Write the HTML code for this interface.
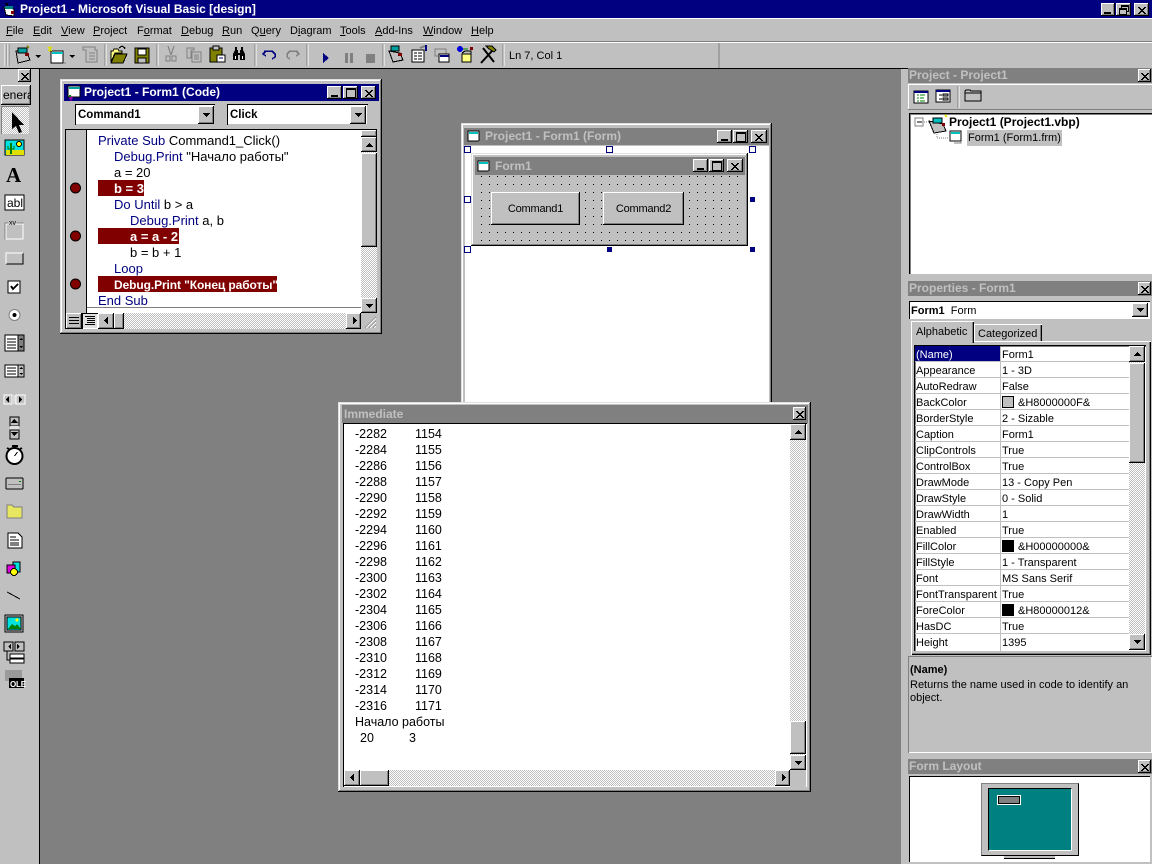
<!DOCTYPE html>
<html><head><meta charset="utf-8"><title>Project1 - Microsoft Visual Basic [design]</title>
<style>
html,body{margin:0;padding:0;background:#808080}
#r{position:relative;width:1152px;height:864px;overflow:hidden;background:#808080;font:12px "Liberation Sans","Noto Sans CJK SC",sans-serif;color:#000}
#r div,#r i,#r span.t,#r span.tt{position:absolute;display:block;box-sizing:border-box}
.t{white-space:pre;line-height:16px;font-style:normal}
.bd{font-weight:bold}
.s{background:#c0c0c0}
.w{background:#fff}
.b{background:#c0c0c0;box-shadow:inset -1px -1px #000,inset 1px 1px #fff,inset -2px -2px #808080}
.win{background:#c0c0c0;box-shadow:inset -1px -1px #000,inset 1px 1px #dfdfdf,inset -2px -2px #808080,inset 2px 2px #fff}
.tb{background:#808080}
.tt{font-weight:bold;font-size:12px;color:#c0c0c0;white-space:pre;line-height:16px}
.nv{background:#000080}
.dz{background:conic-gradient(#fff 25%,#c0c0c0 0 50%,#fff 0 75%,#c0c0c0 0) 0 0/2px 2px}
.b svg{position:absolute;left:50%;top:50%;width:16px;height:16px;margin:-8px 0 0 -8px}
svg{shape-rendering:crispEdges;overflow:visible}
.kw{color:#000080}
u{text-decoration:underline}
.m .t{font-size:11px}
.c .t{font-size:13px}
.i .t{font-size:12.5px}
</style></head><body><div id="r">
<svg width="0" height="0" style="position:absolute"><defs>
<symbol id="cl" overflow="visible"><path d="M-4-3h2v1h1v1h2v-1h1v-1h2v1h-1v1h-1v1h-1v1h1v1h1v1h1v1h-2v-1h-1v-1h-2v1h-1v1h-2v-1h1v-1h1v-1h1v-1h-1v-1h-1v-1h-1z"/></symbol>
<symbol id="mn" overflow="visible"><rect x="-4" y="2" width="7" height="2"/></symbol>
<symbol id="mx" overflow="visible"><path d="M-5-5h10v10h-10zM-4-3v7h8v-7z" fill-rule="evenodd"/></symbol>
<symbol id="rs" overflow="visible"><path d="M-3-5h8v7h-2v3h-8v-7h2zM-2-3v1h5v3h1v-4zM-4 0v4h6v-4z" fill-rule="evenodd"/></symbol>
<symbol id="up" overflow="visible"><path d="M0-2h1v1h1v1h1v1h1v1h-7v-1h1v-1h1v-1h1z"/></symbol>
<symbol id="dn" overflow="visible"><path d="M-3-2h7v1h-1v1h-1v1h-1v1h-1v-1h-1v-1h-1v-1h-1z"/></symbol>
<symbol id="lf" overflow="visible"><path d="M1-4h1v7h-1v-1h-1v-1h-1v-1h-1v-1h1v-1h1v-1h1z"/></symbol>
<symbol id="rt" overflow="visible"><path d="M-1-4h1v1h1v1h1v1h1v1h-1v1h-1v1h-1v1h-1z"/></symbol>
<symbol id="fi" overflow="visible"><rect x="0" y="0" width="11" height="10" fill="#fff" stroke="#000"/><rect x="1" y="1" width="9" height="2" fill="#00c0c0"/><path d="M11 10v2h-7" stroke="#808080" fill="none"/></symbol>
</defs></svg>

<!-- main frame -->
<div class="nv" style="left:0;top:0;width:1152px;height:18px"></div>
<div class="s" style="left:0;top:18px;width:1152px;height:51px;border-top:1px solid #fff"></div>
<div style="left:0;top:41px;width:1152px;height:1px;background:#808080"></div>
<div style="left:0;top:42px;width:1152px;height:1px;background:#fff"></div>
<div style="left:0;top:68px;width:1152px;height:1px;background:#000"></div>
<span class="t bd" style="left:20px;top:1px;color:#fff;font-size:12px">Project1 - Microsoft Visual Basic [design]</span>
<svg style="position:absolute;left:2px;top:2px" width="16" height="16"><path d="M2 5l10 2v7l-8-1z" fill="#fff" stroke="#000"/><rect x="3" y="4" width="8" height="3" fill="#008080"/><rect x="9" y="9" width="3" height="3" fill="#800000"/><path d="M3 1l3 3M6 1l-2 2" stroke="#000"/></svg>
<i class="b" style="left:1101px;top:3px;width:14px;height:13px"><svg viewBox="-8 -8 16 16"><use href="#mn"/></svg></i>
<i class="b" style="left:1116px;top:3px;width:15px;height:13px"><svg viewBox="-8 -8 16 16"><use href="#rs"/></svg></i>
<i class="b" style="left:1134px;top:3px;width:15px;height:13px"><svg viewBox="-8 -8 16 16"><use href="#cl"/></svg></i>

<!-- menu -->
<div class="m" style="left:0;top:0">
<span class="t" style="left:6px;top:23px"><u>F</u>ile</span>
<span class="t" style="left:33px;top:23px"><u>E</u>dit</span>
<span class="t" style="left:61px;top:23px"><u>V</u>iew</span>
<span class="t" style="left:93px;top:23px"><u>P</u>roject</span>
<span class="t" style="left:137px;top:23px">F<u>o</u>rmat</span>
<span class="t" style="left:181px;top:23px"><u>D</u>ebug</span>
<span class="t" style="left:222px;top:23px"><u>R</u>un</span>
<span class="t" style="left:251px;top:23px">Q<u>u</u>ery</span>
<span class="t" style="left:290px;top:23px">D<u>i</u>agram</span>
<span class="t" style="left:340px;top:23px"><u>T</u>ools</span>
<span class="t" style="left:375px;top:23px"><u>A</u>dd-Ins</span>
<span class="t" style="left:423px;top:23px"><u>W</u>indow</span>
<span class="t" style="left:471px;top:23px"><u>H</u>elp</span>
<span class="t" style="left:509px;top:48px">Ln 7, Col 1</span>
</div>

<!-- toolbar -->
<svg style="position:absolute;left:0;top:42px" width="730" height="27">
<g fill="none">
<path d="M5 2v22M8 2v22" stroke="#fff" stroke-width="1"/><path d="M6 2v22M9 2v22" stroke="#808080"/>
<path d="M105 2v22M157 2v22M255 2v22M307 2v22M383 2v22M503 2v22" stroke="#808080"/><path d="M106 2v22M158 2v22M256 2v22M308 2v22M384 2v22M504 2v22" stroke="#fff"/>
<path d="M719 1v25" stroke="#808080"/>
</g>
<!-- add project -->
<path d="M16 9l11 2 3 7-12 3z" fill="#c0c0c0" stroke="#000"/><rect x="18" y="6" width="9" height="5" fill="#00a0a0" stroke="#000"/><rect x="25" y="11" width="4" height="3" fill="#800000"/><path d="M27 4l2 2" stroke="#808000" stroke-width="2"/>
<path d="M35 13h6l-3 3z" fill="#000"/>
<!-- add form -->
<rect x="51" y="9" width="12" height="12" fill="#fff" stroke="#000"/><rect x="52" y="10" width="11" height="2" fill="#00c0c0"/><path d="M48 5l4 4M52 5l-4 4M50 4v6" stroke="#e0e000"/><path d="M64 21h2" stroke="#808080"/>
<path d="M69 13h6l-3 3z" fill="#000"/>
<!-- menu editor -->
<path d="M83 5h12v3h2v12h-11v-12h-3z" fill="#c0c0c0" stroke="#808080"/><path d="M89 11h6M89 14h6M89 17h6" stroke="#808080"/>
<!-- open -->
<path d="M111 20v-11h2l1-2h4l1 2h3v2l-7 0-4 9z" fill="#ffff80" stroke="#000"/><path d="M115 12h12l-4 9h-12z" fill="#808000" stroke="#000"/><path d="M119 6l3-2 3 2-1 1" stroke="#000" fill="none"/>
<!-- save -->
<rect x="135" y="6" width="14" height="15" fill="#808000" stroke="#000"/><rect x="138" y="7" width="8" height="6" fill="#fff" stroke="#000"/><rect x="138" y="16" width="8" height="5" fill="#c0c0c0" stroke="#000"/>
<!-- cut -->
<path d="M168 4l3 9M174 4l-3 9" stroke="#808080" fill="none"/><rect x="166" y="14" width="4" height="5" fill="none" stroke="#808080"/><rect x="172" y="14" width="4" height="5" fill="none" stroke="#808080"/>
<!-- copy -->
<path d="M187 6h7v2h-3v8h-4z" fill="#c0c0c0" stroke="#808080"/><rect x="192" y="10" width="9" height="10" fill="#c0c0c0" stroke="#808080"/><path d="M194 13h5M194 15h5M194 17h5" stroke="#808080"/>
<!-- paste -->
<rect x="210" y="6" width="12" height="14" fill="#808000" stroke="#000"/><rect x="213" y="4" width="6" height="4" fill="#c0c0c0" stroke="#000"/><rect x="217" y="13" width="8" height="7" fill="#fff" stroke="#000"/><path d="M219 16h4" stroke="#000080"/>
<!-- find -->
<path d="M233 18v-6l2-4h3v3h2v-3h3l2 4v6h-5v-5h-2v5z" fill="#000"/><path d="M235 5h2v3h-2zM241 5h2v3h-2z" fill="#000"/><rect x="235" y="14" width="1" height="3" fill="#fff"/><rect x="242" y="14" width="1" height="3" fill="#fff"/>
<!-- undo redo -->
<path d="M266 9l-3 3 3 2M263 12h1M264 9h8l3 3v3l-3 2" stroke="#000080" stroke-width="1.5" fill="none"/>
<path d="M296 9l3 3-3 2M299 12h-1M298 9h-8l-3 3v3l3 2" stroke="#808080" stroke-width="1.5" fill="none"/>
<!-- run pause stop -->
<path d="M323 11l6 5-6 5z" fill="#000080"/>
<rect x="345" y="11" width="3" height="10" fill="#808080"/><rect x="350" y="11" width="3" height="10" fill="#808080"/>
<rect x="366" y="12" width="9" height="9" fill="#808080"/>
<!-- project explorer etc -->
<path d="M389 9l11 2 3 7-10 2z" fill="#c0c0c0" stroke="#000"/><rect x="391" y="4" width="8" height="5" fill="#00a0a0" stroke="#000"/><rect x="398" y="11" width="4" height="3" fill="#800000"/>
<rect x="412" y="8" width="12" height="12" fill="#fff" stroke="#000"/><path d="M414 11h3M414 14h3M414 17h3M418 11h4M418 14h4M418 17h4" stroke="#000"/><path d="M420 6l5-2" stroke="#808080" stroke-width="2"/><rect x="425" y="3" width="2" height="6" fill="#000080"/>
<rect x="435" y="7" width="11" height="7" fill="#c0c0c0" stroke="#808080"/><rect x="439" y="12" width="10" height="8" fill="#fff" stroke="#000"/><rect x="440" y="13" width="9" height="2" fill="#000080"/>
<circle cx="460" cy="7" r="3" fill="#0000e0"/><rect x="470" y="5" width="3" height="3" fill="#800000"/><path d="M463 7h5" stroke="#008000"/><rect x="462" y="12" width="9" height="8" fill="#ffff80" stroke="#000"/><path d="M462 11l3-2h6v3" fill="none" stroke="#000"/>
<path d="M481 21l11-12M483 6l11 14" stroke="#000" stroke-width="2" fill="none" shape-rendering="auto"/><path d="M486 4h6l4 4-2 2-5-3z" fill="#808000" stroke="#000"/>
</svg>

<!-- toolbox -->
<div class="s" style="left:0;top:69px;width:39px;height:795px"></div>
<div style="left:39px;top:69px;width:1px;height:795px;background:#000"></div>
<i class="b" style="left:18px;top:69px;width:13px;height:13px"><svg viewBox="-8 -8 16 16"><use href="#cl"/></svg></i>
<div class="b" style="left:1px;top:85px;width:30px;height:20px;overflow:hidden"><span class="t" style="left:2px;top:2px;position:absolute">enera</span></div>
<div class="dz" style="left:1px;top:106px;width:28px;height:28px;box-shadow:inset 1px 1px #808080"></div>
<svg style="position:absolute;left:0;top:69px" width="39" height="640">
<path d="M12 43v17l4-3 3 7 3-1-3-7h5z" fill="#000"/>
<!-- picture -->
<rect x="5" y="71" width="19" height="15" fill="#00e0e0" stroke="#000"/><rect x="6" y="81" width="18" height="5" fill="#e0e000"/><circle cx="19" cy="75" r="2.5" fill="#ffff00" stroke="#000"/><rect x="10" y="74" width="2" height="11" fill="#008000"/><path d="M8 77v3h6v-3" fill="none" stroke="#008000"/>
<text x="6" y="113" font-family="Liberation Serif" font-weight="bold" style="font-size:21px">A</text>
<rect x="5" y="126" width="19" height="15" fill="#fff" stroke="#000"/><text x="7" y="138" style="font-size:12px">abl</text>
<rect x="5" y="154" width="18" height="16" fill="#c0c0c0" stroke="#808080"/><rect x="6" y="155" width="17" height="15" fill="none" stroke="#fff"/><rect x="8" y="151" width="9" height="4" fill="#c0c0c0"/><text x="9" y="156" style="font-size:7px">xv</text>
<rect x="6" y="184" width="17" height="11" fill="#c0c0c0"/><path d="M6 195h17v-11" fill="none" stroke="#000"/><path d="M6 195v-11h17" fill="none" stroke="#fff"/>
<rect x="8" y="212" width="12" height="12" fill="#fff" stroke="#000"/><path d="M11 217l2 3 5-5" stroke="#000" stroke-width="2" fill="none"/>
<circle cx="14.500" cy="246" r="5.500" fill="#fff" stroke="#808080" shape-rendering="auto"/><circle cx="14.500" cy="246" r="2" fill="#000" shape-rendering="auto"/>
<rect x="5" y="266" width="18" height="16" fill="#fff" stroke="#000"/><path d="M7 270h9M7 273h9M7 276h9M7 279h9" stroke="#000"/><rect x="18" y="266" width="6" height="16" fill="#808080" stroke="#000"/><path d="M21 269l-2 2h4zM21 279l-2-2h4z"/>
<rect x="5" y="296" width="18" height="12" fill="#fff" stroke="#000"/><path d="M7 299h9M7 302h9M7 305h9" stroke="#000"/><rect x="18" y="296" width="6" height="12" fill="#c0c0c0" stroke="#000"/><path d="M21 298l-2 2h4zM21 306l-2-2h4z"/>
<!-- hscroll -->
<rect x="4" y="326" width="8" height="9" fill="#c0c0c0" stroke="#fff"/><path d="M9 327v7l-3-3.500z"/><rect x="12" y="326" width="4" height="9" fill="#d8d8d8"/><rect x="16" y="326" width="9" height="9" fill="#c0c0c0" stroke="#fff"/><path d="M19 327v7l3-3.500z"/>
<!-- vscroll -->
<rect x="10" y="348" width="9" height="9" fill="#c0c0c0" stroke="#000"/><path d="M14 350l-3 4h7z"/><rect x="10" y="357" width="9" height="4" fill="#e0e0e0"/><rect x="10" y="361" width="9" height="9" fill="#c0c0c0" stroke="#000"/><path d="M14 367l-3-4h7z"/>
<!-- timer -->
<circle cx="14.500" cy="387" r="8" fill="#fff" stroke="#000" stroke-width="2" shape-rendering="auto"/><rect x="12" y="376" width="6" height="2"/><path d="M14.500 387l3-4" stroke="#000"/><path d="M9 380l-2-1M20 380l2-1" stroke="#000" stroke-width="2"/>
<!-- drive -->
<rect x="6" y="409" width="17" height="11" rx="1" fill="#c0c0c0" stroke="#000"/><rect x="8" y="415" width="13" height="1" fill="#808080"/><rect x="19" y="412" width="2" height="1" fill="#008000"/>
<!-- dir -->
<path d="M7 449v-13h5l2 2h8v11z" fill="#e8e860" stroke="#808080"/>
<!-- file -->
<path d="M8 464h10l4 4v11h-14z" fill="#fff" stroke="#000"/><path d="M10 468h6M10 471h9M10 474h9M10 476h9" stroke="#000"/>
<!-- shape -->
<rect x="13" y="493" width="7" height="10" fill="#00e0e0" stroke="#000"/><rect x="7" y="496" width="8" height="8" fill="#e000e0" stroke="#000"/><circle cx="14" cy="503" r="3.500" fill="#ffff00" stroke="#000"/>
<!-- line -->
<path d="M7 523l13 7" stroke="#000" fill="none"/>
<!-- image -->
<rect x="5" y="546" width="18" height="17" fill="#c0c0c0" stroke="#000"/><rect x="7" y="548" width="14" height="13" fill="#00e0e0" stroke="#000"/><path d="M8 560l4-5 3 2 2-2 4 5z" fill="#008000"/><circle cx="17" cy="551" r="1.500" fill="#ffff00"/>
<!-- data -->
<rect x="4" y="573" width="9" height="9" fill="#c0c0c0" stroke="#000"/><rect x="15" y="573" width="9" height="9" fill="#c0c0c0" stroke="#000"/><path d="M7 575v5M11 575l-3 2.500 3 2.500zM21 575v5M17 575l3 2.500-3 2.500z"/><path d="M7 582v9h3" stroke="#000" fill="none"/><rect x="10" y="585" width="14" height="4" fill="#fff" stroke="#000"/><rect x="10" y="590" width="14" height="4" fill="#fff" stroke="#000"/>
<!-- ole -->
<rect x="5" y="601" width="17" height="11" fill="#808080" opacity=".6"/><rect x="9" y="609" width="15" height="10" fill="#000"/><text x="10" y="618" fill="#fff" style="font-size:8px;font-weight:bold;letter-spacing:-.2px">OLE</text>
</svg>

<!-- right dock -->
<div class="s" style="left:901px;top:69px;width:251px;height:795px"></div>
<div class="tb" style="left:908px;top:68px;width:244px;height:15px"></div>
<span class="tt" style="left:909px;top:67px">Project - Project1</span>
<i class="b" style="left:1138px;top:69px;width:13px;height:13px"><svg viewBox="-8 -8 16 16"><use href="#cl"/></svg></i>
<div style="left:908px;top:84px;width:244px;height:1px;background:#fff"></div>
<div style="left:908px;top:84px;width:1px;height:25px;background:#fff"></div>
<div style="left:908px;top:109px;width:244px;height:1px;background:#808080"></div>
<svg style="position:absolute;left:908px;top:84px" width="90" height="26">
<rect x="6" y="7" width="14" height="12" fill="#fff" stroke="#000"/><rect x="6" y="7" width="14" height="2" fill="#000080"/><path d="M9 11h2M9 14h2M9 17h2M12 11h5M12 14h4M12 17h5" stroke="#008000"/>
<rect x="28" y="6" width="14" height="12" fill="#fff" stroke="#000"/><rect x="28" y="6" width="14" height="2" fill="#000080"/><path d="M31 11h3M31 15h3" stroke="#000"/><rect x="35" y="10" width="5" height="2" fill="#c0c0c0" stroke="#000"/><rect x="35" y="14" width="5" height="2" fill="#c0c0c0" stroke="#000"/>
<path d="M50 2v22" stroke="#808080"/><path d="M51 2v22" stroke="#fff"/>
<path d="M57 17v-10l1-1h4l1 1h10v10z" fill="#c0c0c0" stroke="#000"/><path d="M57 9h16" stroke="#000"/>
</svg>
<div class="w" style="left:909px;top:113px;width:243px;height:161px;box-shadow:inset 1px 1px #000,inset 2px 2px #808080"></div>
<svg style="position:absolute;left:909px;top:113px" width="160" height="40">
<rect x="6" y="5" width="8" height="8" fill="#fff" stroke="#808080"/><path d="M8 9h5" stroke="#000"/>
<path d="M15 9h5M28 17v8h12" stroke="#808080" stroke-dasharray="1 1" fill="none"/>
<path d="M20 8l14 3 3 7-12 2z" fill="#c0c0c0" stroke="#000"/><rect x="24" y="5" width="9" height="5" fill="#00c0c0" stroke="#000"/><rect x="33" y="10" width="3" height="3" fill="#800000"/><path d="M36 2l2 2" stroke="#e0e000" stroke-width="2"/>
<use href="#fi" x="41" y="18"/>
</svg>
<span class="t bd" style="left:949px;top:114px">Project1 (Project1.vbp)</span>
<div class="s" style="left:967px;top:130px;width:95px;height:16px"></div>
<div class="m" style="left:0;top:0"><span class="t" style="left:968px;top:130px">Form1 (Form1.frm)</span></div>

<!-- properties -->
<div class="tb" style="left:908px;top:281px;width:244px;height:15px"></div>
<span class="tt" style="left:909px;top:280px">Properties - Form1</span>
<i class="b" style="left:1138px;top:282px;width:13px;height:13px"><svg viewBox="-8 -8 16 16"><use href="#cl"/></svg></i>
<div class="w" style="left:909px;top:301px;width:241px;height:18px;box-shadow:inset 1px 1px #000"></div>
<i class="b" style="left:1132px;top:303px;width:16px;height:14px"><svg viewBox="-8 -8 16 16"><use href="#dn"/></svg></i>
<div style="left:911px;top:341px;width:240px;height:314px;box-shadow:inset 1px 1px #fff,inset -1px -1px #000,inset -2px -2px #808080"></div>
<div class="s" style="left:974px;top:324px;width:68px;height:17px;box-shadow:inset 1px 1px #fff,inset -1px 0 #000,inset -2px 0 #808080"></div>
<div class="s" style="left:911px;top:321px;width:63px;height:22px;box-shadow:inset 1px 1px #fff,inset -1px 0 #000,inset -2px 0 #808080"></div>
<div class="w" style="left:914px;top:345px;width:232px;height:306px;box-shadow:inset 1px 1px #000,inset 2px 2px #808080"></div>
<div class="s" style="left:1000px;top:347px;width:1px;height:304px"></div>
<div class="nv" style="left:915px;top:346px;width:85px;height:15px"></div>
<div style="left:915px;top:361px;width:214px;height:288px;background:repeating-linear-gradient(#c0c0c0 0 1px,transparent 1px 16px)"></div>
<div class="m" style="left:0;top:1px">
<span class="t" style="left:911px;top:302px"><b>Form1</b>  Form</span>
<span class="t" style="left:916px;top:323px">Alphabetic</span>
<span class="t" style="left:978px;top:325px">Categorized</span>
<span class="t" style="left:916px;top:346px;color:#fff">(Name)</span><span class="t" style="left:1002px;top:346px">Form1</span>
<span class="t" style="left:916px;top:362px">Appearance</span><span class="t" style="left:1002px;top:362px">1 - 3D</span>
<span class="t" style="left:916px;top:378px">AutoRedraw</span><span class="t" style="left:1002px;top:378px">False</span>
<span class="t" style="left:916px;top:394px">BackColor</span><span class="t" style="left:1018px;top:394px">&amp;H8000000F&amp;</span>
<span class="t" style="left:916px;top:410px">BorderStyle</span><span class="t" style="left:1002px;top:410px">2 - Sizable</span>
<span class="t" style="left:916px;top:426px">Caption</span><span class="t" style="left:1002px;top:426px">Form1</span>
<span class="t" style="left:916px;top:442px">ClipControls</span><span class="t" style="left:1002px;top:442px">True</span>
<span class="t" style="left:916px;top:458px">ControlBox</span><span class="t" style="left:1002px;top:458px">True</span>
<span class="t" style="left:916px;top:474px">DrawMode</span><span class="t" style="left:1002px;top:474px">13 - Copy Pen</span>
<span class="t" style="left:916px;top:490px">DrawStyle</span><span class="t" style="left:1002px;top:490px">0 - Solid</span>
<span class="t" style="left:916px;top:506px">DrawWidth</span><span class="t" style="left:1002px;top:506px">1</span>
<span class="t" style="left:916px;top:522px">Enabled</span><span class="t" style="left:1002px;top:522px">True</span>
<span class="t" style="left:916px;top:538px">FillColor</span><span class="t" style="left:1018px;top:538px">&amp;H00000000&amp;</span>
<span class="t" style="left:916px;top:554px">FillStyle</span><span class="t" style="left:1002px;top:554px">1 - Transparent</span>
<span class="t" style="left:916px;top:570px">Font</span><span class="t" style="left:1002px;top:570px">MS Sans Serif</span>
<span class="t" style="left:916px;top:586px">FontTransparent</span><span class="t" style="left:1002px;top:586px">True</span>
<span class="t" style="left:916px;top:602px">ForeColor</span><span class="t" style="left:1018px;top:602px">&amp;H80000012&amp;</span>
<span class="t" style="left:916px;top:618px">HasDC</span><span class="t" style="left:1002px;top:618px">True</span>
<span class="t" style="left:916px;top:634px">Height</span><span class="t" style="left:1002px;top:634px">1395</span>
<span class="t bd" style="left:910px;top:661px">(Name)</span>
<span class="t" style="left:910px;top:678px;line-height:13px">Returns the name used in code to identify an
object.</span>
</div>
<div style="left:1002px;top:396px;width:12px;height:12px;background:#c0c0c0;border:1px solid #000"></div>
<div style="left:1002px;top:540px;width:12px;height:12px;background:#000"></div>
<div style="left:1002px;top:604px;width:12px;height:12px;background:#000"></div>
<div class="dz" style="left:1129px;top:346px;width:16px;height:304px"></div>
<i class="b" style="left:1129px;top:346px;width:16px;height:16px"><svg viewBox="-8 -8 16 16"><use href="#up"/></svg></i>
<i class="b" style="left:1129px;top:363px;width:16px;height:100px"></i>
<i class="b" style="left:1129px;top:634px;width:16px;height:16px"><svg viewBox="-8 -8 16 16"><use href="#dn"/></svg></i>
<div style="left:908px;top:656px;width:244px;height:97px;box-shadow:inset 1px 1px #808080,inset -1px -1px #fff"></div>

<!-- form layout -->
<div class="tb" style="left:908px;top:759px;width:244px;height:15px"></div>
<span class="tt" style="left:909px;top:758px">Form Layout</span>
<i class="b" style="left:1138px;top:760px;width:13px;height:13px"><svg viewBox="-8 -8 16 16"><use href="#cl"/></svg></i>
<div class="w" style="left:909px;top:776px;width:241px;height:86px;box-shadow:inset 1px 1px #000"></div>
<div style="left:1004px;top:855px;width:51px;height:4px;background:#c0c0c0;border-bottom:1px solid #000"></div>
<div class="s" style="left:981px;top:783px;width:98px;height:73px;border:1px solid #808080;border-right-color:#000;border-bottom-color:#000"></div>
<div style="left:988px;top:788px;width:84px;height:63px;background:#008080;border:1px solid;border-color:#000 #fff #fff #000"></div>
<div style="left:997px;top:795px;width:24px;height:10px;background:#808080;border:1px solid #fff;box-shadow:inset 0 0 0 1px #000"></div>

<!-- code window -->
<div class="win" style="left:60px;top:79px;width:322px;height:255px"></div>
<div class="nv" style="left:64px;top:84px;width:315px;height:17px"></div>
<svg style="position:absolute;left:67px;top:85px" width="16" height="16"><rect x="1" y="1" width="12" height="11" fill="#fff" stroke="#000"/><rect x="2" y="2" width="11" height="2" fill="#00a0a0"/><path d="M2 13h4M4 11v5" stroke="#c000c0"/><rect x="2" y="10" width="2" height="2" fill="#008000"/></svg>
<span class="t bd" style="left:84px;top:84px;color:#fff">Project1 - Form1 (Code)</span>
<i class="b" style="left:327px;top:86px;width:15px;height:13px"><svg viewBox="-8 -8 16 16"><use href="#mn"/></svg></i>
<i class="b" style="left:343px;top:86px;width:15px;height:13px"><svg viewBox="-8 -8 16 16"><use href="#mx"/></svg></i>
<i class="b" style="left:361px;top:86px;width:15px;height:13px"><svg viewBox="-8 -8 16 16"><use href="#cl"/></svg></i>
<div class="w" style="left:75px;top:104px;width:140px;height:21px;box-shadow:inset 1px 1px #000,inset -1px -1px #c0c0c0"></div>
<span class="t bd" style="left:78px;top:107px;font-size:11.5px">Command1</span>
<i class="b" style="left:198px;top:106px;width:16px;height:18px"><svg viewBox="-8 -8 16 16"><use href="#dn"/></svg></i>
<div class="w" style="left:227px;top:104px;width:141px;height:21px;box-shadow:inset 1px 1px #000,inset -1px -1px #c0c0c0"></div>
<span class="t bd" style="left:230px;top:107px;font-size:11.5px">Click</span>
<i class="b" style="left:350px;top:106px;width:16px;height:18px"><svg viewBox="-8 -8 16 16"><use href="#dn"/></svg></i>
<div class="w" style="left:65px;top:129px;width:312px;height:200px;box-shadow:inset 1px 1px #000"></div>
<div class="s" style="left:66px;top:130px;width:21px;height:183px;border-right:1px solid #000"></div>
<div style="left:87px;top:307px;width:274px;height:1px;background:#808080"></div>
<div style="left:98px;top:180px;width:46px;height:16px;background:#800000"></div>
<div style="left:98px;top:228px;width:81px;height:16px;background:#800000"></div>
<div style="left:98px;top:276px;width:179px;height:16px;background:#800000"></div>
<div class="c" style="left:0;top:0">
<span class="t kw" style="left:98px;top:133px">Private Sub <span style="color:#000">Command1_Click()</span></span>
<span class="t kw" style="left:114px;top:149px">Debug.Print <span style="color:#000">"Начало работы"</span></span>
<span class="t" style="left:114px;top:165px">a = 20</span>
<span class="t bd" style="left:114px;top:181px;color:#fff">b = 3</span>
<span class="t kw" style="left:114px;top:197px">Do Until <span style="color:#000">b &gt; a</span></span>
<span class="t kw" style="left:130px;top:213px">Debug.Print <span style="color:#000">a, b</span></span>
<span class="t bd" style="left:130px;top:229px;color:#fff">a = a - 2</span>
<span class="t" style="left:130px;top:245px">b = b + 1</span>
<span class="t kw" style="left:114px;top:261px">Loop</span>
<span class="t bd" style="left:114px;top:277px;font-size:12px;letter-spacing:-.1px;color:#fff">Debug.Print "Конец работы"</span>
<span class="t kw" style="left:98px;top:293px">End Sub</span>
</div>
<svg style="position:absolute;left:66px;top:180px" width="20" height="112"><g fill="#800000" stroke="#000" shape-rendering="auto"><circle cx="9.500" cy="8" r="5"/><circle cx="9.500" cy="56" r="5"/><circle cx="9.500" cy="104" r="5"/></g></svg>
<div class="dz" style="left:361px;top:130px;width:16px;height:183px"></div>
<i class="b" style="left:361px;top:130px;width:16px;height:7px"></i>
<i class="b" style="left:361px;top:137px;width:16px;height:15px"><svg viewBox="-8 -8 16 16"><use href="#up"/></svg></i>
<i class="b" style="left:361px;top:153px;width:16px;height:94px"></i>
<i class="b" style="left:361px;top:298px;width:16px;height:15px"><svg viewBox="-8 -8 16 16"><use href="#dn"/></svg></i>
<div class="dz" style="left:98px;top:313px;width:263px;height:16px"></div>
<i class="b" style="left:66px;top:313px;width:16px;height:16px"><svg viewBox="-8 -8 16 16"><path d="M-5-3.500h10M-5-.5h10M-5 2.500h10" stroke="#000"/></svg></i>
<i class="b" style="left:82px;top:313px;width:16px;height:16px;background:#dfdfdf;box-shadow:inset 1px 1px #000,inset -1px -1px #fff"><svg viewBox="-8 -8 16 16"><path d="M-5-4.500h10M-3-2.500h8M-3-.5h8M-3 1.500h8M-5 3.500h10" stroke="#000"/></svg></i>
<i class="b" style="left:98px;top:313px;width:16px;height:16px"><svg viewBox="-8 -8 16 16"><use href="#lf"/></svg></i>
<i class="b" style="left:114px;top:313px;width:10px;height:16px"></i>
<i class="b" style="left:346px;top:313px;width:15px;height:16px"><svg viewBox="-8 -8 16 16"><use href="#rt"/></svg></i>
<div class="s" style="left:361px;top:313px;width:16px;height:16px"></div>
<svg style="position:absolute;left:361px;top:313px" width="16" height="16"><path d="M15 4L4 15M15 8L8 15M15 12l-3 3" stroke="#808080" shape-rendering="auto"/><path d="M15 5L5 15M15 9L9 15M15 13l-2 2" stroke="#fff" shape-rendering="auto"/></svg>

<!-- form designer -->
<div class="win" style="left:461px;top:123px;width:311px;height:285px"></div>
<div class="tb" style="left:464px;top:128px;width:305px;height:17px"></div>
<svg style="position:absolute;left:468px;top:130px" width="14" height="14"><use href="#fi" x="0" y="1"/></svg>
<span class="tt" style="left:485px;top:128px">Project1 - Form1 (Form)</span>
<i class="b" style="left:717px;top:130px;width:15px;height:13px"><svg viewBox="-8 -8 16 16"><use href="#mn"/></svg></i>
<i class="b" style="left:733px;top:130px;width:15px;height:13px"><svg viewBox="-8 -8 16 16"><use href="#mx"/></svg></i>
<i class="b" style="left:751px;top:130px;width:16px;height:13px"><svg viewBox="-8 -8 16 16"><use href="#cl"/></svg></i>
<div class="w" style="left:465px;top:146px;width:304px;height:262px"></div>
<div class="win" style="left:471px;top:153px;width:277px;height:93px;background:#c0c0c0"></div>
<div class="tb" style="left:475px;top:157px;width:270px;height:18px"></div>
<svg style="position:absolute;left:478px;top:160px" width="14" height="14"><use href="#fi" x="0" y="1"/></svg>
<span class="tt" style="left:495px;top:158px">Form1</span>
<i class="b" style="left:693px;top:159px;width:15px;height:13px"><svg viewBox="-8 -8 16 16"><use href="#mn"/></svg></i>
<i class="b" style="left:709px;top:159px;width:15px;height:13px"><svg viewBox="-8 -8 16 16"><use href="#mx"/></svg></i>
<i class="b" style="left:727px;top:159px;width:16px;height:13px"><svg viewBox="-8 -8 16 16"><use href="#cl"/></svg></i>
<div style="left:475px;top:175px;width:270px;height:68px;background-image:conic-gradient(from 270deg at 1px 1px,#000 25%,transparent 0);background-size:8px 8px;background-position:-2px 1px"></div>
<div class="b" style="left:491px;top:192px;width:89px;height:33px"></div>
<span class="t" style="left:491px;top:201px;width:89px;text-align:center;font-size:11px;letter-spacing:-.2px">Command1</span>
<div class="b" style="left:603px;top:192px;width:81px;height:33px"></div>
<span class="t" style="left:603px;top:201px;width:81px;text-align:center;font-size:11px;letter-spacing:-.2px">Command2</span>
<div class="w" style="left:464px;top:146px;width:7px;height:7px;border:1px solid #000080"></div>
<div class="w" style="left:606px;top:146px;width:7px;height:7px;border:1px solid #000080"></div>
<div class="w" style="left:749px;top:146px;width:7px;height:7px;border:1px solid #000080"></div>
<div class="w" style="left:464px;top:196px;width:7px;height:7px;border:1px solid #000080"></div>
<div class="nv" style="left:750px;top:197px;width:5px;height:5px"></div>
<div class="w" style="left:464px;top:246px;width:7px;height:7px;border:1px solid #000080"></div>
<div class="nv" style="left:607px;top:247px;width:5px;height:5px"></div>
<div class="nv" style="left:750px;top:247px;width:5px;height:5px"></div>

<!-- immediate -->
<div class="win" style="left:338px;top:402px;width:473px;height:390px"></div>
<div class="tb" style="left:342px;top:405px;width:466px;height:18px"></div>
<span class="tt" style="left:344px;top:406px">Immediate</span>
<i class="b" style="left:793px;top:407px;width:13px;height:13px"><svg viewBox="-8 -8 16 16"><use href="#cl"/></svg></i>
<div class="w" style="left:343px;top:423px;width:464px;height:364px;box-shadow:inset 1px 1px #000"></div>
<div class="i" style="left:0;top:0">
<span class="t" style="left:355px;top:426px">-2282</span><span class="t" style="left:415px;top:426px">1154</span>
<span class="t" style="left:355px;top:442px">-2284</span><span class="t" style="left:415px;top:442px">1155</span>
<span class="t" style="left:355px;top:458px">-2286</span><span class="t" style="left:415px;top:458px">1156</span>
<span class="t" style="left:355px;top:474px">-2288</span><span class="t" style="left:415px;top:474px">1157</span>
<span class="t" style="left:355px;top:490px">-2290</span><span class="t" style="left:415px;top:490px">1158</span>
<span class="t" style="left:355px;top:506px">-2292</span><span class="t" style="left:415px;top:506px">1159</span>
<span class="t" style="left:355px;top:522px">-2294</span><span class="t" style="left:415px;top:522px">1160</span>
<span class="t" style="left:355px;top:538px">-2296</span><span class="t" style="left:415px;top:538px">1161</span>
<span class="t" style="left:355px;top:554px">-2298</span><span class="t" style="left:415px;top:554px">1162</span>
<span class="t" style="left:355px;top:570px">-2300</span><span class="t" style="left:415px;top:570px">1163</span>
<span class="t" style="left:355px;top:586px">-2302</span><span class="t" style="left:415px;top:586px">1164</span>
<span class="t" style="left:355px;top:602px">-2304</span><span class="t" style="left:415px;top:602px">1165</span>
<span class="t" style="left:355px;top:618px">-2306</span><span class="t" style="left:415px;top:618px">1166</span>
<span class="t" style="left:355px;top:634px">-2308</span><span class="t" style="left:415px;top:634px">1167</span>
<span class="t" style="left:355px;top:650px">-2310</span><span class="t" style="left:415px;top:650px">1168</span>
<span class="t" style="left:355px;top:666px">-2312</span><span class="t" style="left:415px;top:666px">1169</span>
<span class="t" style="left:355px;top:682px">-2314</span><span class="t" style="left:415px;top:682px">1170</span>
<span class="t" style="left:355px;top:698px">-2316</span><span class="t" style="left:415px;top:698px">1171</span>
<span class="t" style="left:355px;top:714px">Начало работы</span>
<span class="t" style="left:360px;top:730px">20</span><span class="t" style="left:409px;top:730px">3</span>
</div>
<div class="dz" style="left:790px;top:424px;width:16px;height:347px"></div>
<i class="b" style="left:790px;top:424px;width:16px;height:16px"><svg viewBox="-8 -8 16 16"><use href="#up"/></svg></i>
<i class="b" style="left:790px;top:721px;width:16px;height:33px"></i>
<i class="b" style="left:790px;top:755px;width:16px;height:15px"><svg viewBox="-8 -8 16 16"><use href="#dn"/></svg></i>
<div class="dz" style="left:344px;top:770px;width:446px;height:16px"></div>
<i class="b" style="left:344px;top:770px;width:16px;height:16px"><svg viewBox="-8 -8 16 16"><use href="#lf"/></svg></i>
<i class="b" style="left:360px;top:770px;width:29px;height:16px"></i>
<i class="b" style="left:775px;top:770px;width:15px;height:16px"><svg viewBox="-8 -8 16 16"><use href="#rt"/></svg></i>
<div class="s" style="left:790px;top:770px;width:16px;height:17px"></div>
</div></body></html>
